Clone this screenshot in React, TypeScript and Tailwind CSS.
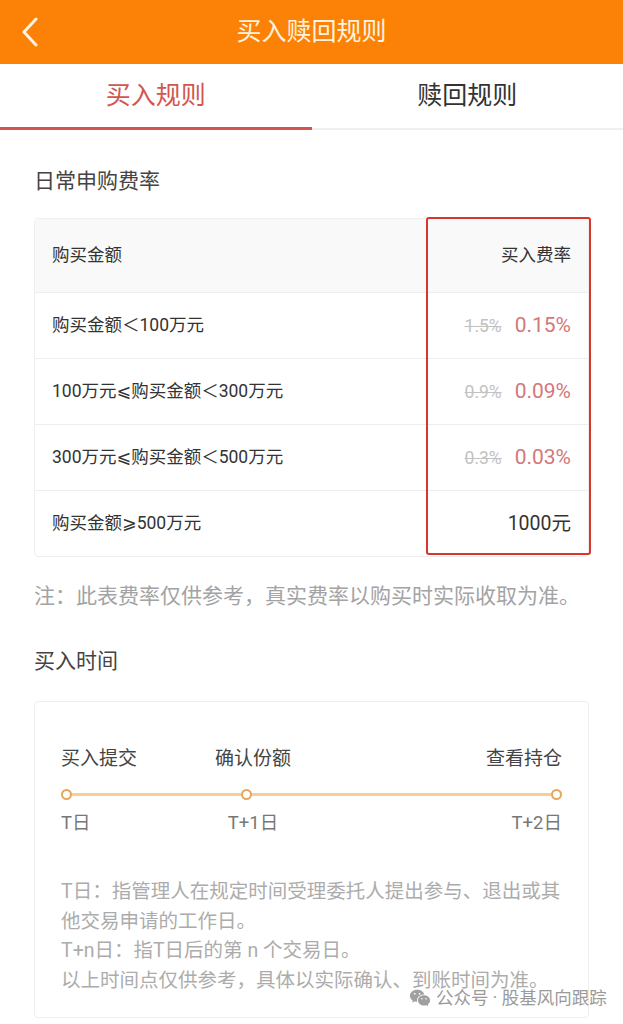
import { RiWechatFill } from 'react-icons/ri';

const FONT = { fontFamily: 'Roboto, "Noto Sans CJK SC", "DejaVu Sans", sans-serif' };

const ROWS = [
  { label: '购买金额＜100万元', old: '1.5%', rate: '0.15%' },
  { label: '100万元⩽购买金额＜300万元', old: '0.9%', rate: '0.09%' },
  { label: '300万元⩽购买金额＜500万元', old: '0.3%', rate: '0.03%' },
  { label: '购买金额⩾500万元', old: '', rate: '1000元' },
];

function Dot() {
  return <div className="w-[11px] h-[11px] rounded-full border-2 border-[#e9a557] bg-white shrink-0" />;
}

export default function App() {
  return (
    <div className="relative w-full min-h-[1024px] bg-white overflow-hidden" style={FONT}>
      {/* header */}
      <div className="relative h-[64px] bg-[#fc8207] flex items-center justify-center">
        <svg className="absolute left-[20px] top-[17px]" width="20" height="30" viewBox="0 0 20 30">
          <polyline points="16,2 4,15 16,28" fill="none" stroke="#fff4e4" strokeWidth="3" strokeLinecap="round" strokeLinejoin="round" />
        </svg>
        <span className="text-[25px] text-[#fff3df]">买入赎回规则</span>
      </div>

      {/* tabs */}
      <div className="flex h-[66px] border-b-2 border-[#efefef]">
        <div className="flex-1 flex items-center justify-center text-[25px] text-[#d2564f] border-b-[3px] border-[#d5534c] -mb-[2px]">
          买入规则
        </div>
        <div className="flex-1 flex items-center justify-center text-[25px] text-[#333]">赎回规则</div>
      </div>

      <div className="px-[34px]">
        <h2 className="pt-[36px] text-[21px] leading-[30px] text-[#444]">日常申购费率</h2>

        <div className="relative mt-[22px] rounded-[4px] border border-[#eeeeee]">
          <div className="h-[73px] bg-[#f9f9f9] flex items-center justify-between px-[17px] text-[17.5px] text-[#333]">
            <span>购买金额</span>
            <span>买入费率</span>
          </div>
          {ROWS.map(r => (
            <div key={r.label} className="h-[66px] border-t border-[#eeeeee] flex items-center justify-between px-[17px]">
              <span className="text-[17.5px] text-[#333]">{r.label}</span>
              <span className="flex items-baseline gap-[13px]">
                {r.old && <span className="text-[17.5px] text-[#c2c2c2] line-through">{r.old}</span>}
                <span className={r.old ? 'text-[21px] text-[#d4777a]' : 'text-[19.5px] text-[#333]'}>{r.rate}</span>
              </span>
            </div>
          ))}
          <div className="absolute left-[391px] -top-[2px] -right-[3px] bottom-[1px] border-2 border-[#d8352b] rounded-[3px]" />
        </div>

        <p className="mt-[24px] text-[21px] leading-[30px] text-[#a3a3a3] whitespace-nowrap">
          注：此表费率仅供参考，真实费率以购买时实际收取为准。
        </p>

        <h2 className="mt-[35px] text-[21px] leading-[30px] text-[#444]">买入时间</h2>

        <div className="mt-[25px] h-[317px] rounded-[4px] border border-[#eeeeee] px-[26px] pt-[44px]">
          <div className="flex text-[19px] leading-[26px] text-[#444]">
            <span className="w-[153px]">买入提交</span>
            <span className="w-[78px] text-center">确认份额</span>
            <span className="flex-1 text-right">查看持仓</span>
          </div>
          <div className="mt-[13px] flex items-center h-[18px]">
            <Dot />
            <div className="w-[169px] h-[3px] bg-[#f6d08f]" />
            <Dot />
            <div className="flex-1 h-[3px] bg-[#f6d08f]" />
            <Dot />
          </div>
          <div className="mt-[7px] flex text-[18.5px] leading-[26px] text-[#777]">
            <span className="w-[153px]">T日</span>
            <span className="w-[78px] text-center">T+1日</span>
            <span className="flex-1 text-right">T+2日</span>
          </div>
          <div className="mt-[41px] text-[19.5px] leading-[29.5px] text-[#acacac] whitespace-nowrap">
            <div>T日：指管理人在规定时间受理委托人提出参与、退出或其</div>
            <div>他交易申请的工作日。</div>
            <div>T+n日：指T日后的第 n 个交易日。</div>
            <div>以上时间点仅供参考，具体以实际确认、到账时间为准。</div>
          </div>
        </div>
      </div>

      {/* watermark */}
      <div className="absolute left-[409px] top-[985px] flex items-center gap-[5px] text-[17.5px] text-[#9a9a9a]">
        <RiWechatFill className="w-[22px] h-[22px] text-[#a0a0a0]" />
        <span>公众号 · 股基风向跟踪</span>
      </div>
    </div>
  );
}
